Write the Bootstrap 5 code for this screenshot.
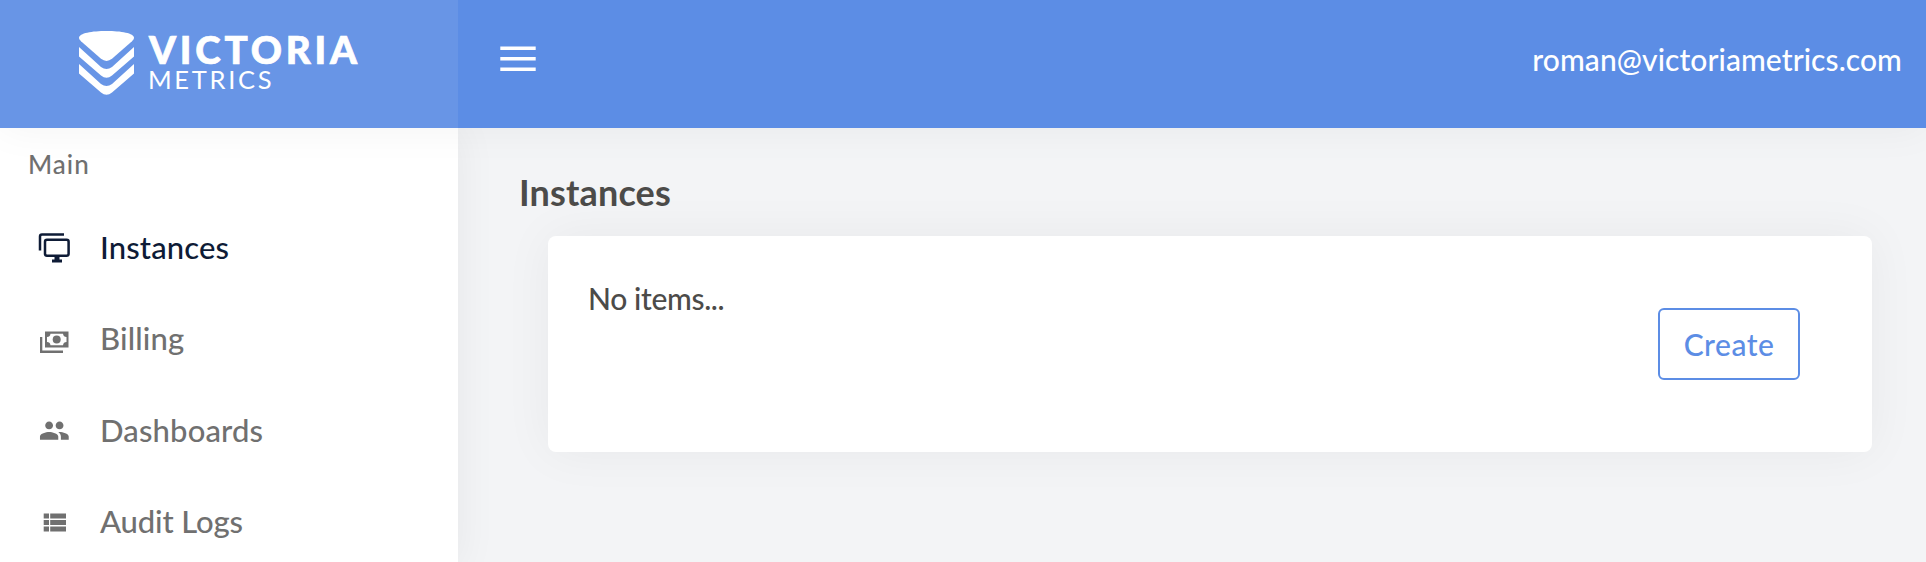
<!DOCTYPE html>
<html lang="en">
<head>
<meta charset="utf-8">
<meta name="viewport" content="width=device-width, initial-scale=1">
<title>Instances</title>
<link rel="stylesheet" href="https://cdn.jsdelivr.net/npm/bootstrap@5.3.0/dist/css/bootstrap.min.css">
<style>
:root { --vm-blue: #5c8de5; --vm-blue-light: #6895e6; }
body { font-family: Lato, sans-serif; font-size: 30px; font-weight: 500; line-height: 1.5; color: #4c4b49; background: #f3f4f6; }
.topbar { height: 128px; background: var(--vm-blue); box-shadow: 0 0 40px rgba(0,0,0,.05); z-index: 3; }
.topbar-tools { padding-bottom: 10px; }
.toggle-btn { margin-left: 42px; }
.user-mail { letter-spacing: .08px; }
.brand-area { width: 458px; background: var(--vm-blue-light); }
.side-menu { width: 458px; background: #fff; box-shadow: 0 0 40px rgba(0,0,0,.06); z-index: 2; }
.menu-title { font-size: 26px; line-height: 40px; letter-spacing: 1px; color: #707070; padding: 16px 28px 0; }
.side-menu .nav { padding-top: 18px; }
.side-menu .nav-link { height: 91.5px; padding: 0 0 0 38px; font-size: 31px; letter-spacing: .15px; color: #707070; display: flex; align-items: center; }
.side-menu .nav-link span { padding-bottom: 2px; }
.side-menu .nav-link.active { color: #0e1b36; }
.side-menu .audit-link { letter-spacing: -.15px; }
.side-menu svg { width: 32px; height: 32px; margin-right: 30px; fill: currentColor; }
main { padding: 37px 54px 0 61px; }
h1 { font-size: 36px; line-height: 54px; font-weight: 700; letter-spacing: .15px; margin: 0 0 17px; }
.panel { height: 216px; margin-left: 29px; padding: 40px 72px 0 40px; border: 0; border-radius: 8px; box-shadow: 0 0 50px rgba(0,0,0,.05); }
.empty-note { letter-spacing: -.35px; }
.create-btn { width: 142px; height: 72px; margin-top: 32px; padding: 0; border: 2px solid var(--vm-blue); border-radius: 6px; color: var(--vm-blue); font-size: 30px; font-weight: 500; letter-spacing: .5px; }
</style>
</head>
<body class="vh-100 overflow-hidden d-flex flex-column">
<header class="topbar d-flex position-relative flex-shrink-0">
  <a class="brand-area d-block flex-shrink-0" href="#" aria-label="Victoria Metrics">
    <svg width="458" height="128" fill="#fff" font-family="Lato, sans-serif">
      <path d="M79 38C79 33 92 31 106.500 31S134 33 134 38Q134 39.500 132 41.300L112 58.800Q106.500 63 101 58.800L81 41.300Q79 39.500 79 38Z"/>
      <path d="M79 47L101 67Q106.500 71 112 67L134 47V56.500L112 75.500Q106.500 80 101 75.500L79 56.500Z"/>
      <path d="M79 64L101 84Q106.500 88 112 84L134 64V73.500L112 92.500Q106.500 97 101 92.500L79 73.500Z"/>
      <text x="149" y="63.500" font-size="38.500" font-weight="900" stroke="#fff" stroke-width=".7" textLength="208">VICTORIA</text>
      <text x="148" y="88.800" font-size="25.500" font-weight="400" textLength="123.500">METRICS</text>
    </svg>
  </a>
  <div class="topbar-tools d-flex flex-grow-1 align-items-center justify-content-between">
    <button class="toggle-btn btn p-0 border-0 lh-1 d-flex" aria-label="Toggle menu">
      <svg width="36" height="26" fill="#fff"><path d="M.3.500h35.400v3.500H.3zM.3 11h35.400v3.500H.3zM.3 21.500h35.400v3.500H.3z"/></svg>
    </button>
    <span class="user-mail text-white pe-4">roman@victoriametrics.com</span>
  </div>
</header>
<div class="d-flex flex-grow-1">
  <aside class="side-menu position-relative flex-shrink-0">
    <div class="menu-title">Main</div>
    <nav class="nav flex-column">
      <a class="nav-link active" href="#"><svg viewBox="0 0 32 32"><path d="M2 18.500V4.500Q2 2.500 4 2.500H26" fill="none" stroke="currentColor" stroke-width="2.500"/><rect x="7" y="7.700" width="23.600" height="16" rx="2" fill="none" stroke="currentColor" stroke-width="2.500"/><path d="M16.500 24.500h5v3h2.500v3H14v-3h2.500z"/></svg><span>Instances</span></a>
      <a class="nav-link" href="#"><svg viewBox="0 0 32 32"><path fill-rule="evenodd" d="M7 8.500h23.500v16H7zM12.500 10.800Q12 14 9 14v5q3 0 3.500 3.200H25Q25.500 19 28.500 19v-5Q25.500 14 25 10.800z"/><circle cx="18.700" cy="16.500" r="4"/><path d="M2 14h2.300v13.500H25V30H2z"/></svg><span>Billing</span></a>
      <a class="nav-link" href="#"><svg viewBox="0 0 24 24"><path transform="translate(.5 0) scale(.98)" d="M16 11c1.660 0 2.990-1.340 2.990-3S17.660 5 16 5s-3 1.340-3 3 1.340 3 3 3zm-8 0c1.660 0 2.990-1.340 2.990-3S9.660 5 8 5 5 6.340 5 8s1.340 3 3 3zm0 2c-2.330 0-7 1.170-7 3.500V19h14v-2.500c0-2.330-4.670-3.500-7-3.500zm8 0c-.29 0-.62.020-.97.050 1.160.84 1.970 1.970 1.970 3.450V19h6v-2.500c0-2.330-4.670-3.500-7-3.500z"/></svg><span>Dashboards</span></a>
      <a class="nav-link audit-link" href="#"><svg viewBox="0 0 32 32"><path d="M5.700 7.500h5.300v5H5.700zM12.200 7.500h15.800v5H12.200zM5.700 14h5.300v5H5.700zM12.200 14h15.800v5H12.200zM5.700 20.500h5.300v5H5.700zM12.200 20.500h15.800v5H12.200z"/></svg><span>Audit Logs</span></a>
    </nav>
  </aside>
  <main class="flex-grow-1">
    <h1>Instances</h1>
    <section class="panel card flex-row justify-content-between align-items-start">
      <span class="empty-note">No items...</span>
      <button class="create-btn btn">Create</button>
    </section>
  </main>
</div>
<script src="https://cdn.jsdelivr.net/npm/bootstrap@5.3.0/dist/js/bootstrap.bundle.min.js"></script>
</body>
</html>
